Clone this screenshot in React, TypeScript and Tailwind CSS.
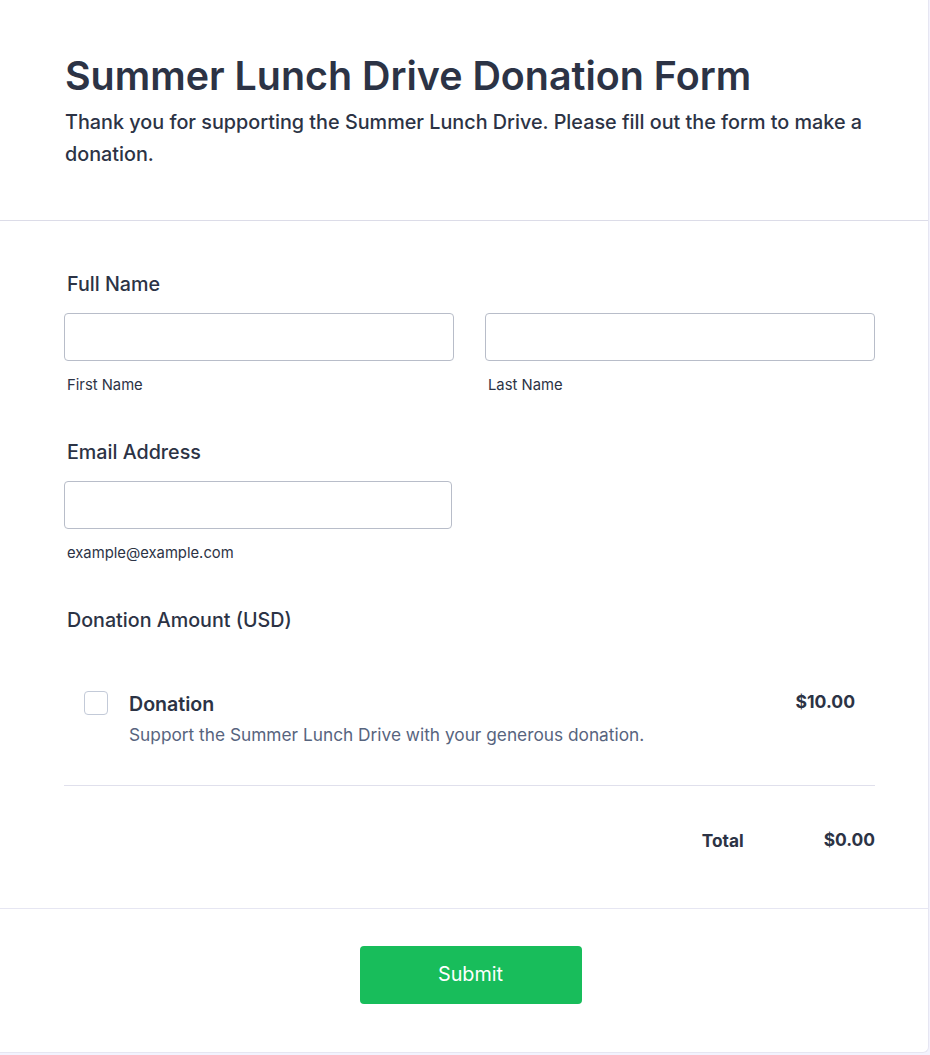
const Field = ({ sub, className }: { sub?: string; className: string }) => (
  <div className={className}>
    <input className="w-full h-12 rounded border border-[#b8bdc9] bg-white px-3 outline-none" />
    {sub && <p className="mt-[14px] ml-[3px] text-[14.8px] leading-5 text-[#2c3345]">{sub}</p>}
  </div>
);

export default function App() {
  return (
    <div className="min-h-[1055px] bg-[#f3f3fe] font-['Inter',sans-serif] text-[#2c3345]">
      <div className="w-[929px] h-[1053px] bg-white border-r border-b border-[#e6e6f2] rounded-br-md flex flex-col">
        {/* header */}
        <div className="pl-[65px] pr-[52px] pt-[52px] pb-[50px] border-b border-[#dcdce8]">
          <h1 className="text-[39.4px] leading-[48px] font-semibold">Summer Lunch Drive Donation Form</h1>
          <p className="mt-[6px] text-[19.8px] leading-[32px] font-medium">
            Thank you for supporting the Summer Lunch Drive. Please fill out the form to make a donation.
          </p>
        </div>

        {/* form body */}
        <div className="pl-[64px] pr-[53px] pt-[51px] pb-[55px] border-b border-[#e6e6f2]">
          <label className="block ml-[3px] text-[19.7px] leading-6 font-medium">Full Name</label>
          <div className="mt-[17px] flex gap-[31px]">
            <Field className="w-[390px]" sub="First Name" />
            <Field className="w-[390px]" sub="Last Name" />
          </div>

          <label className="block mt-[45px] ml-[3px] text-[19.7px] leading-6 font-medium">Email Address</label>
          <Field className="mt-[17px] w-[388px]" sub="example@example.com" />

          <label className="block mt-[45px] ml-[3px] text-[19.7px] leading-6 font-medium">Donation Amount (USD)</label>

          <div className="mt-[59px] pl-[20px] pr-[20px] pb-[38px] border-b border-[#e0e0ec] flex items-start">
            <span className="w-6 h-6 shrink-0 rounded border border-[#c3cad8] bg-white" />
            <div className="ml-[21px] flex-1">
              <p className="mt-[1px] text-[19.6px] leading-6 font-semibold">Donation</p>
              <p className="mt-[7px] text-[17.3px] leading-6 text-[#57647e]">
                Support the Summer Lunch Drive with your generous donation.
              </p>
            </div>
            <p className="mt-[-1px] text-[17.6px] leading-6 font-bold">$10.00</p>
          </div>

          <div className="mt-[42px] flex justify-end items-start">
            <p className="mt-[1px] text-[17.3px] leading-6 font-bold">Total</p>
            <p className="ml-[80px] text-right text-[17.4px] leading-6 font-bold">$0.00</p>
          </div>
        </div>

        {/* footer */}
        <div className="flex justify-center pt-[37px]">
          <button className="ml-[13px] w-[222px] h-[58px] rounded bg-[#18bd5b] text-white text-[19.8px] font-normal">
            Submit
          </button>
        </div>
      </div>
    </div>
  );
}
